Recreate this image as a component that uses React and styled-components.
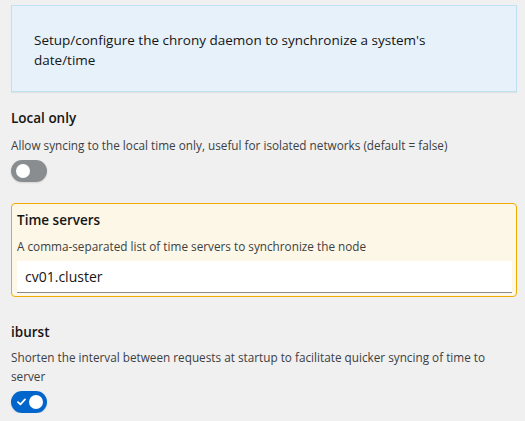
import styled, { createGlobalStyle } from "styled-components";

const GlobalStyle = createGlobalStyle`
  html, body {
    margin: 0;
    padding: 0;
    background: #f0f0f0;
  }
  body {
    font-family: "Open Sans", "Noto Sans", sans-serif;
    color: #151515;
  }
`;

const Page = styled.div`
  padding: 5px 8px 0 11px;
  display: flex;
  flex-direction: column;
`;

const InfoBox = styled.div`
  background: #e7f1fa;
  border: 1px solid #bee1f4;
  box-shadow: 0 1px 1px rgba(0, 0, 0, 0.06);
  padding: 24px 40px 21px 22px;
  font-size: 13.5px;
  line-height: 20px;
  color: #151515;
`;

const Field = styled.div`
  display: flex;
  flex-direction: column;
  margin-top: ${(p) => p.$top || 0}px;
  ${(p) =>
    p.$warning &&
    `
    background: #fdf7e7;
    border: 1px solid #f0ab00;
    border-radius: 4px;
    padding: 6px 4px 3px 5px;
  `}
`;

const Title = styled.div`
  font-size: 13.5px;
  font-weight: 600;
  line-height: 20px;
`;

const Help = styled.div`
  font-size: 11.75px;
  line-height: 19px;
  color: #3c3f42;
  margin-top: ${(p) => p.$top || 7}px;
`;

const Input = styled.input`
  margin-top: 5px;
  height: 32px;
  box-sizing: border-box;
  border: none;
  border-bottom: 1px solid #8a8d90;
  background: #fff;
  padding: 0 8px;
  font-family: inherit;
  font-size: 14px;
  color: #151515;
  outline: none;
`;

const Track = styled.div`
  margin-top: 5px;
  width: 36px;
  height: 22px;
  border-radius: 11px;
  background: ${(p) => (p.$on ? "#0066cc" : "#8a8d90")};
  box-shadow: 0 1px 2px rgba(0, 0, 0, 0.12);
  display: flex;
  align-items: center;
  justify-content: ${(p) => (p.$on ? "space-between" : "flex-start")};
  padding: 0 4px 0 ${(p) => (p.$on ? 6 : 5)}px;
  box-sizing: border-box;
`;

const Knob = styled.span`
  width: 14px;
  height: 14px;
  border-radius: 50%;
  background: #fff;
`;

function Toggle({ on }) {
  return (
    <Track $on={on}>
      {on && (
        <svg width="9" height="8" viewBox="0 0 9 8" fill="none">
          <path
            d="M1 4.2 L3.4 6.4 L8 1.4"
            stroke="#fff"
            strokeWidth="1.8"
            strokeLinecap="round"
            strokeLinejoin="round"
          />
        </svg>
      )}
      <Knob />
    </Track>
  );
}

export default function App() {
  return (
    <>
      <GlobalStyle />
      <Page>
        <InfoBox>
          Setup/configure the chrony daemon to synchronize a system's date/time
        </InfoBox>

        <Field $top={16}>
          <Title>Local only</Title>
          <Help $top={8}>
            Allow syncing to the local time only, useful for isolated networks
            (default = false)
          </Help>
          <Toggle on={false} />
        </Field>

        <Field $top={21} $warning>
          <Title>Time servers</Title>
          <Help $top={7}>
            A comma-separated list of time servers to synchronize the node
          </Help>
          <Input defaultValue="cv01.cluster" />
        </Field>

        <Field $top={25}>
          <Title>iburst</Title>
          <Help $top={6}>
            Shorten the interval between requests at startup to facilitate
            quicker syncing of time to server
          </Help>
          <Toggle on />
        </Field>
      </Page>
    </>
  );
}
